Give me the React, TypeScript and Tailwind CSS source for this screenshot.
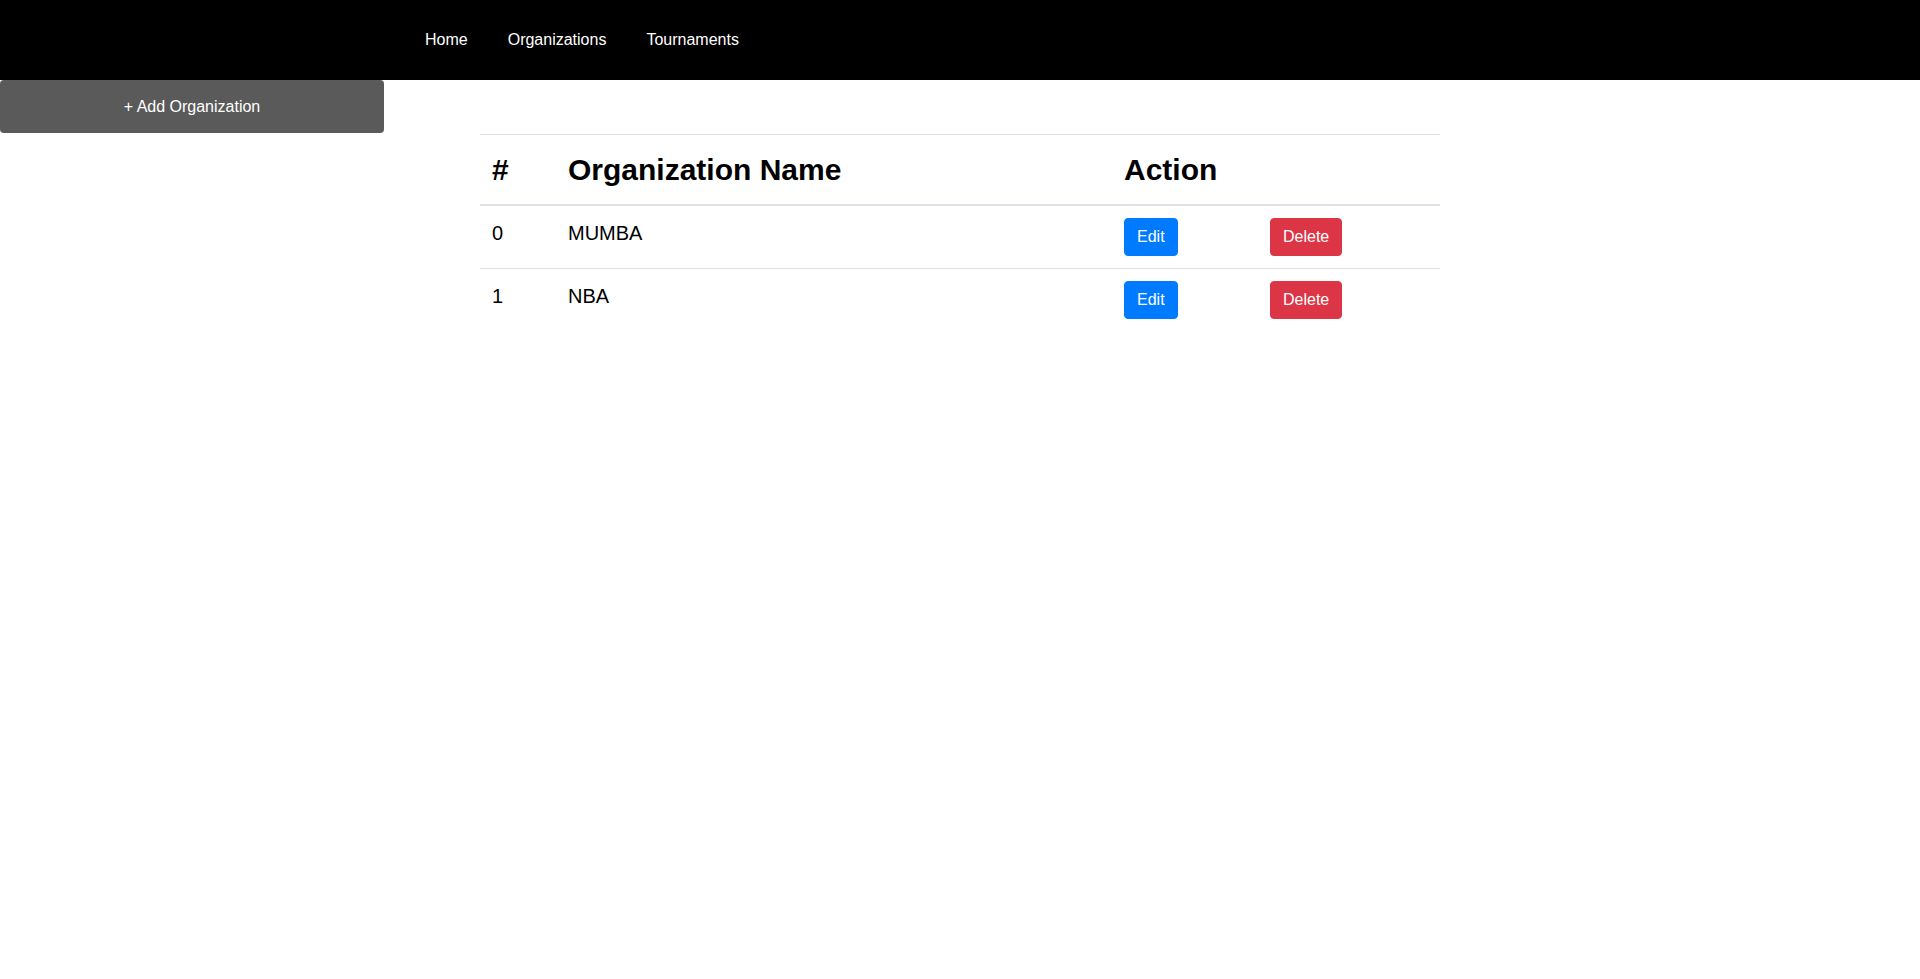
const orgs = ["MUMBA", "NBA"];

function NavBar() {
  return (
    <nav className="h-20 bg-black flex items-center pl-[405px]">
      {["Home", "Organizations", "Tournaments"].map((label) => (
        <a key={label} href="#" className="px-5 text-white text-base leading-6">
          {label}
        </a>
      ))}
    </nav>
  );
}

export default function App() {
  return (
    <div className="min-h-screen bg-white text-black font-['Liberation_Sans',Arial,sans-serif]">
      <NavBar />
      <button className="w-[384px] h-[53px] rounded bg-[#5a5a5a] text-white text-base">
        + Add Organization
      </button>
      <div className="w-[960px] mx-auto mt-px">
        <table className="w-full border-collapse text-left">
          <thead>
            <tr className="border-t border-[#dee2e6] border-b-2">
              <th className="w-[76px] p-3 text-[30px] leading-[45px] font-bold align-bottom">#</th>
              <th className="w-[556px] p-3 text-[30px] leading-[45px] font-bold align-bottom">Organization Name</th>
              <th colSpan={2} className="p-3 text-[30px] leading-[45px] font-bold align-bottom">Action</th>
            </tr>
          </thead>
          <tbody>
            {orgs.map((name, i) => (
              <tr key={name} className="border-t border-[#dee2e6]">
                <td className="p-3 text-xl leading-[30px] align-top">{i}</td>
                <td className="p-3 text-xl leading-[30px] align-top">{name}</td>
                <td className="w-[146px] p-3 align-top">
                  <button className="h-[38px] px-3 border border-[#007bff] rounded bg-[#007bff] text-white text-base">Edit</button>
                </td>
                <td className="p-3 align-top">
                  <button className="h-[38px] px-3 border border-[#dc3545] rounded bg-[#dc3545] text-white text-base">Delete</button>
                </td>
              </tr>
            ))}
          </tbody>
        </table>
      </div>
    </div>
  );
}
